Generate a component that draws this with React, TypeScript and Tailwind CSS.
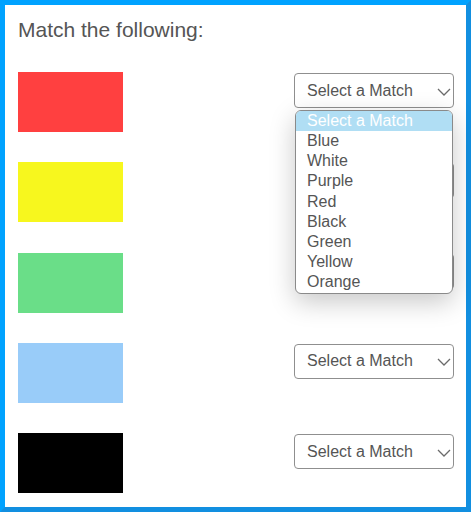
import type {FC, ReactElement} from 'react';

const swatches = ['bg-[#ff4040]', 'bg-[#f7f71e]', 'bg-[#6ade88]', 'bg-[#99ccf9]', 'bg-black'];
const options = ['Blue', 'White', 'Purple', 'Red', 'Black', 'Green', 'Yellow', 'Orange'];

const Chevron: FC = (): ReactElement => (
    <svg width="14" height="8" viewBox="0 0 14 8" className="shrink-0 mt-[2px]">
        <polyline points="1,1 7,7 13,1" fill="none" stroke="#6b6b6b" strokeWidth="1.3" />
    </svg>
);

// covered selects keep their box but their label sits under the open list
const MatchSelect: FC<{ covered?: boolean }> = ({covered}): ReactElement => (
    <div className={`mt-[1px] w-[160px] h-[35px] flex items-center justify-between pl-[12px] pr-[2px] border border-[#8f8f8f] rounded-[4px] bg-white ${covered ? 'border-l-transparent' : ''}`}>
        <span className={`text-[16px] leading-[20px] text-[#555] ${covered ? 'invisible' : ''}`}>Select a Match</span>
        <Chevron />
    </div>
);

const App: FC = (): ReactElement => {
    return (
        <div className="relative w-[471px] h-[512px] bg-white border-[5px] border-[#00a2ff] border-r-[#128fe0] border-b-[#128fe0] font-['Liberation_Sans',Arial,sans-serif]">
            <div className="pl-[13px] pr-[12px] pt-[13px]">
                <h1 className="text-[21px] leading-[24px] text-[#555]">Match the following:</h1>
                <div className="mt-[30px] flex flex-col gap-[30.25px]">
                    {swatches.map((color, idx) => (
                        <div className="flex items-start justify-between" key={idx}>
                            <div className={`w-[105px] h-[60px] ${color}`} />
                            <MatchSelect covered={idx === 1 || idx === 2} />
                        </div>
                    ))}
                </div>
            </div>

            {/* open dropdown of the first select */}
            <div className="absolute left-[290px] top-[105px] w-[158px] h-[184px] bg-white border border-[#8a8a8a] rounded-[6px] shadow-[0_8px_26px_rgba(0,0,0,0.22)] overflow-hidden">
                <div className="h-[20px] pl-[11px] bg-[#b0def4] text-white text-[16px] leading-[20px]">Select a Match</div>
                {options.map((opt) => (
                    <div className="h-[20.2px] pl-[11px] text-[#555] text-[16px] leading-[20px]" key={opt}>{opt}</div>
                ))}
            </div>
        </div>
    );
};

export default App;
